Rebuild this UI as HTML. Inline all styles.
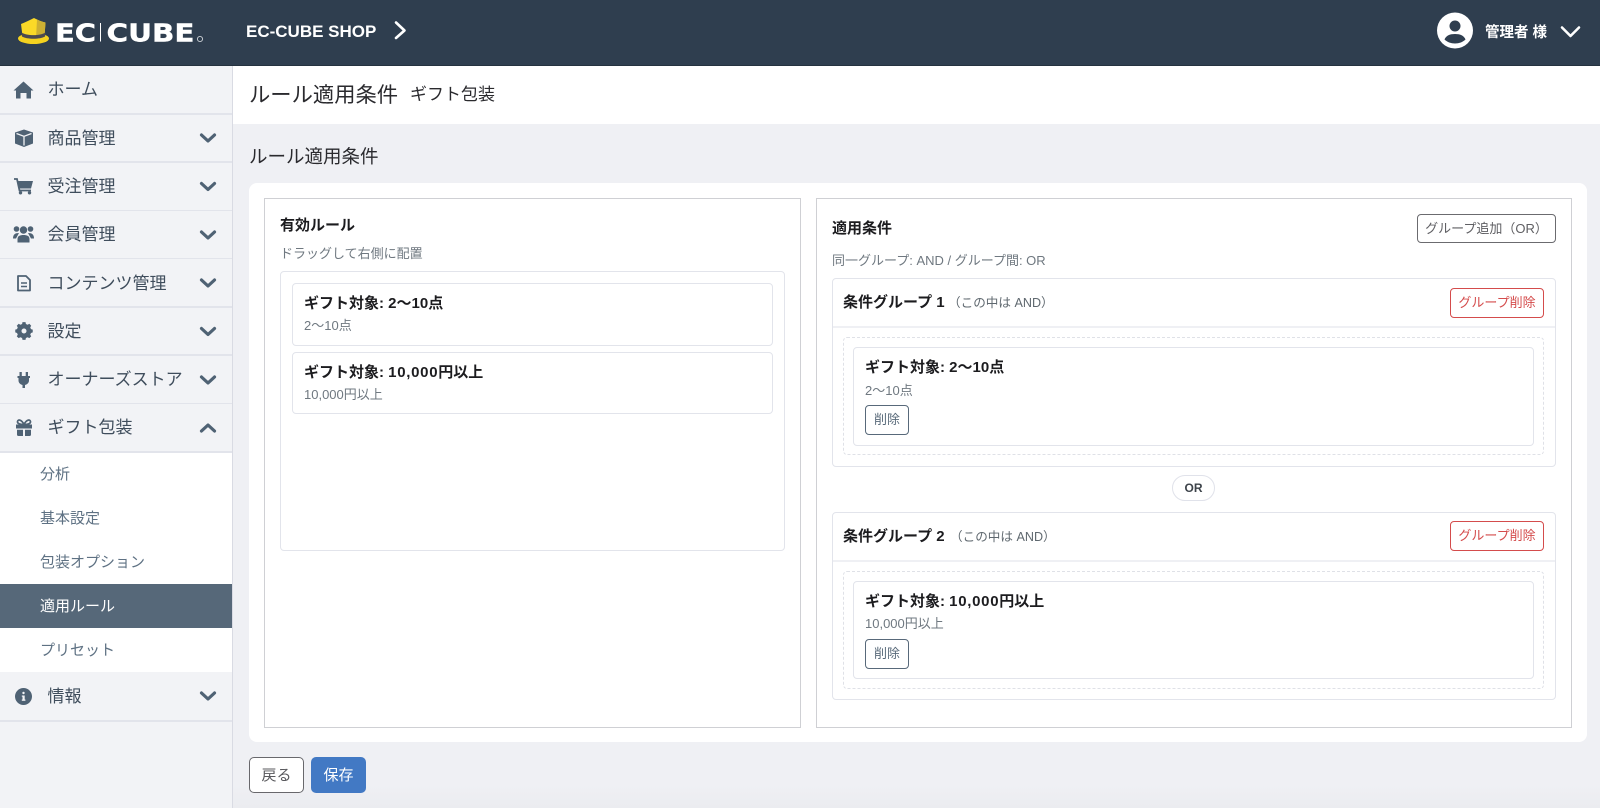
<!DOCTYPE html>
<html lang="ja"><head><meta charset="utf-8"><title>ルール適用条件</title>
<style>
*{box-sizing:border-box}
html,body{margin:0;padding:0}
body{width:1600px;height:808px;overflow:hidden;position:relative;background:linear-gradient(#eff0f4 785px,#ebecf0 808px);font-family:"Liberation Sans","Noto Sans CJK JP",sans-serif;color:#222}
.a{position:absolute}
.t{position:absolute;white-space:nowrap;line-height:24px;height:24px}
.b{font-weight:700;color:#1c1c1f}
svg{position:absolute;overflow:visible}
.line{position:absolute;left:0;width:232px;height:1.5px;background:#e2e4eb}
.nav{font-size:17px;color:#3f4d5c;left:47.5px}
.sub{font-size:15px;color:#5e7183;left:40px}
.box{position:absolute;background:#fff;border:1.5px solid #e2e4eb;border-radius:4px}
.col{position:absolute;background:#fff;border:1.5px solid #cfd0d4}
.mut{font-size:13px;color:#6f7880}
.ti{font-size:15px}
.n{letter-spacing:.7px}
.btn{position:absolute;border-radius:4px;text-align:center;background:#fff;white-space:nowrap}
.red{border:1.5px solid #d44c4c;color:#d44c4c;font-size:13px;line-height:27px;width:94px;height:30px}
.del{border:1.5px solid #58697a;color:#5a6b7b;font-size:13px;line-height:28px;width:44px;height:30px}
.dash{position:absolute;border:1.5px dashed #dfe1e7;border-radius:4px}
</style></head><body>
<div class="a" style="left:0;top:0;width:1600px;height:66px;background:#2f3e4f;border-bottom:1px solid #25323f"></div>
<svg style="left:0;top:0" width="240" height="66">
<ellipse cx="33.500" cy="38.500" rx="15.500" ry="5.500" fill="#f5d21f"/>
<path d="M21 24 C26 22 30 20 34 18 C38 20 41 21.500 45.500 22.500 L44.500 36 C38 39 28 39 22.500 36Z" fill="#fbd927"/>
<path d="M37 19.500 C39.500 21 42 22 45.500 22.500 L44.500 36 C42 37.200 39.500 38 36 38.300Z" fill="#cdb033"/>
<path d="M21.500 32.500 C27 36 40 36 45.500 32.500 L45 36.500 C40 39.500 27 39.500 22 36.500Z" fill="#4d4a50"/>
<text x="55" y="41.500" font-family="DejaVu Sans" font-weight="700" font-size="25" fill="#fff" stroke="#fff" stroke-width=".4" textLength="41" lengthAdjust="spacingAndGlyphs">EC</text>
<rect x="100" y="23" width="1" height="18.500" fill="#fff"/>
<text x="106.500" y="41.500" font-family="DejaVu Sans" font-weight="700" font-size="25" fill="#fff" stroke="#fff" stroke-width=".4" textLength="88" lengthAdjust="spacingAndGlyphs">CUBE</text>
<circle cx="200" cy="39" r="2.600" fill="none" stroke="#cfd3d8" stroke-width=".9"/>
</svg>
<div class="t" style="left:246px;top:20px;font-size:17px;font-weight:700;color:#fff">EC-CUBE SHOP</div>
<svg style="left:0;top:0" width="1600" height="66" fill="none" stroke="#fff" stroke-width="2.600" stroke-linecap="round" stroke-linejoin="round">
<path d="M396 22.500L404.500 30.500L396 38"/><path d="M1562 27.500L1570.500 36L1579 27.500"/>
</svg>
<svg style="left:1437px;top:12px" width="36" height="37"><circle cx="18" cy="18.500" r="18" fill="#fff"/><circle cx="18" cy="14" r="5.500" fill="#2f3e4f"/><path d="M7.500 27.500C9 23.500 13 22 18 22S27 23.500 28.500 27.500C26 30 22 31.500 18 31.500S10 30 7.500 27.500Z" fill="#2f3e4f"/></svg>
<div class="t" style="left:1485px;top:20.500px;font-size:14.500px;font-weight:700;color:#fff">管理者 様</div>

<div class="a" style="left:0;top:66px;width:233px;height:742px;background:#f2f3f6;border-right:1px solid #d9dbe3"></div>
<div class="a" style="left:0;top:452px;width:232px;height:220px;background:#fff"></div>
<div class="a" style="left:0;top:584px;width:232px;height:44px;background:#566879"></div>
<div class="line" style="top:113px"></div><div class="line" style="top:161px"></div><div class="line" style="top:209.500px"></div><div class="line" style="top:257.500px"></div><div class="line" style="top:306px"></div><div class="line" style="top:354px"></div><div class="line" style="top:402.500px"></div><div class="line" style="top:451px"></div><div class="line" style="top:720px"></div>

<div class="t nav" style="top:78px">ホーム</div>
<div class="t nav" style="top:126.500px">商品管理</div>
<div class="t nav" style="top:174.500px">受注管理</div>
<div class="t nav" style="top:223px">会員管理</div>
<div class="t nav" style="top:271.500px">コンテンツ管理</div>
<div class="t nav" style="top:319.500px">設定</div>
<div class="t nav" style="top:368px">オーナーズストア</div>
<div class="t nav" style="top:416px">ギフト包装</div>
<div class="t sub" style="top:462.500px">分析</div>
<div class="t sub" style="top:506.500px">基本設定</div>
<div class="t sub" style="top:550.500px">包装オプション</div>
<div class="t sub" style="top:594.500px;color:#fff">適用ルール</div>
<div class="t sub" style="top:638.500px">プリセット</div>
<div class="t nav" style="top:684.500px">情報</div>

<svg style="left:0;top:0" width="232" height="808" fill="#4f6274">
<path d="M23.500 81.500L33.500 90.500H31V98.500H26.500V93H20.500V98.500H16V90.500H13.500Z"/>
<path d="M24 129.500L33 132.500V143.500L24 147L15 143.500V132.500Z"/><path d="M16.500 133.500L24 136.300L31.500 133.500M24 136.300V145.500" fill="none" stroke="#f2f3f6" stroke-width="1.300"/>
<path d="M17.500 181H33L31 188.500H19Z"/><path d="M14 179H17L19.500 190.500H31" fill="none" stroke="#4f6274" stroke-width="1.800"/><circle cx="20.500" cy="192.800" r="1.700"/><circle cx="29.500" cy="192.800" r="1.700"/>
<circle cx="23.500" cy="230" r="3.700"/><circle cx="16.500" cy="229" r="2.800"/><circle cx="30.500" cy="229" r="2.800"/><path d="M17.500 242.500V239C17.500 236 20 235 23.500 235S29.500 236 29.500 239V242.500Z"/><path d="M13 238.500C13 234.500 15 233 19 233L16 238.500ZM34 238.500C34 234.500 32 233 28 233L31 238.500Z"/>
<path d="M18 276H26L30 280V290.500H18Z" fill="none" stroke="#4f6274" stroke-width="1.800" stroke-linejoin="round"/><path d="M21 283H27M21 286.500H27" stroke="#4f6274" stroke-width="1.400"/>
<g transform="translate(24 331) scale(.76) translate(-23.500 -331.750)"><path fill-rule="evenodd" d="M21.500 320H25.500L26 322.500L28.300 323.500L30.500 322.200L33 324.800L31.700 327L32.700 329.300L35 330V333.500L32.700 334.300L31.700 336.500L33 338.800L30.500 341.200L28.300 340L26 341L25.500 343.500H21.500L21 341L18.700 340L16.500 341.200L14 338.800L15.300 336.500L14.300 334.300L12 333.500V330L14.300 329.300L15.300 327L14 324.800L16.500 322.200L18.700 323.500L21 322.500ZM23.500 328.500A3.300 3.300 0 1 0 23.500 335.100A3.300 3.300 0 1 0 23.500 328.500Z"/></g>
<path d="M19.500 372H21.800V376H25.700V372H28V376H30V378H29V380.500C29 383 27 384.500 25 385V388H22.500V385C20.500 384.500 18.500 383 18.500 380.500V378H17.500V376H19.500Z"/>
<path d="M16 424.500H32V428.500H16Z"/><path d="M17 429.800H23V436H18.500C17.500 436 17 435.500 17 434.500ZM25 429.800H31V434.500C31 435.500 30.500 436 29.500 436H25Z"/><path d="M24 424.500C21.500 419.500 18 419 17.500 421.500C17.200 423.500 20 424.500 24 424.500C28 424.500 30.800 423.500 30.500 421.500C30 419 26.500 419.500 24 424.500Z" fill="none" stroke="#4f6274" stroke-width="1.700"/>
<circle cx="23.500" cy="696.500" r="8.500"/><rect x="22.500" y="695.500" width="2.200" height="5" fill="#f2f3f6"/><rect x="21.800" y="699.500" width="3.600" height="1.300" fill="#f2f3f6"/><rect x="21.800" y="695.500" width="2.400" height="1.200" fill="#f2f3f6"/><circle cx="23.500" cy="693" r="1.200" fill="#f2f3f6"/>
<g fill="none" stroke="#4f6274" stroke-width="3.200" stroke-linecap="round" stroke-linejoin="round">
<path d="M201.500 135L208 141L214.500 135"/><path d="M201.500 183.500L208 189.500L214.500 183.500"/><path d="M201.500 232L208 238L214.500 232"/><path d="M201.500 280L208 286L214.500 280"/><path d="M201.500 328.500L208 334.500L214.500 328.500"/><path d="M201.500 377L208 383L214.500 377"/><path d="M201.500 431L208 425L214.500 431"/><path d="M201.500 693L208 699L214.500 693"/>
</g></svg>

<div class="a" style="left:233px;top:66px;width:1367px;height:58px;background:#fff"></div>
<div class="t" style="left:249px;top:82.500px;font-size:21.300px;color:#2a2a2e">ルール適用条件</div>
<div class="t" style="left:410px;top:82.500px;font-size:17px;color:#2a2a2e">ギフト包装</div>
<div class="t" style="left:249px;top:144.500px;font-size:18.500px;color:#2a2a2e">ルール適用条件</div>
<div class="a" style="left:249px;top:183px;width:1338px;height:559px;background:#fff;border-radius:8px"></div>

<div class="col" style="left:264px;top:198px;width:537px;height:530px"></div>
<div class="t b ti" style="left:280px;top:214px">有効ルール</div>
<div class="t mut" style="left:280px;top:242px">ドラッグして右側に配置</div>
<div class="box" style="left:280px;top:271px;width:505px;height:280px"></div>
<div class="box" style="left:292px;top:283px;width:481px;height:63px"></div>
<div class="t b ti" style="left:304px;top:292px">ギフト対象: 2〜10点</div>
<div class="t mut" style="left:304px;top:313.500px">2〜10点</div>
<div class="box" style="left:292px;top:352px;width:481px;height:62px"></div>
<div class="t b ti" style="left:304px;top:361px">ギフト対象: <span class="n">10,000</span>円以上</div>
<div class="t mut" style="left:304px;top:382.500px">10,000円以上</div>

<div class="col" style="left:816px;top:198px;width:756px;height:530px"></div>
<div class="t b ti" style="left:832px;top:217px">適用条件</div>
<div class="btn" style="left:1417px;top:214px;width:139px;height:29px;border:1.5px solid #6b6b6f;color:#5f5f63;font-size:13px;line-height:27px">グループ追加（OR）</div>
<div class="t mut" style="left:832px;top:249px">同一グループ: AND / グループ間: OR</div>

<div class="box" style="left:832px;top:278px;width:724px;height:189px"></div>
<div class="a" style="left:833px;top:326px;width:722px;height:1.500px;background:#eff0f4"></div>
<div class="t b ti" style="left:843px;top:291px">条件グループ 1</div>
<div class="t" style="left:948px;top:291px;font-size:12.600px;color:#5f686f">（この中は AND）</div>
<div class="btn red" style="left:1450px;top:288px">グループ削除</div>
<div class="dash" style="left:843px;top:337px;width:701px;height:118px"></div>
<div class="box" style="left:853px;top:347px;width:681px;height:99px"></div>
<div class="t b ti" style="left:865px;top:356px">ギフト対象: 2〜10点</div>
<div class="t mut" style="left:865px;top:378.500px">2〜10点</div>
<div class="btn del" style="left:865px;top:405px">削除</div>

<div class="a" style="left:1172px;top:475px;width:43px;height:26px;border:1.5px solid #e0e2ea;border-radius:13px;background:#fff;text-align:center;font-size:12px;font-weight:700;line-height:24px;color:#3d434a">OR</div>

<div class="box" style="left:832px;top:512px;width:724px;height:188px"></div>
<div class="a" style="left:833px;top:560px;width:722px;height:1.500px;background:#eff0f4"></div>
<div class="t b ti" style="left:843px;top:524.500px">条件グループ 2</div>
<div class="t" style="left:950px;top:524.500px;font-size:12.600px;color:#5f686f">（この中は AND）</div>
<div class="btn red" style="left:1450px;top:521px">グループ削除</div>
<div class="dash" style="left:843px;top:571px;width:701px;height:118px"></div>
<div class="box" style="left:853px;top:581px;width:681px;height:98px"></div>
<div class="t b ti" style="left:865px;top:590px">ギフト対象: <span class="n">10,000</span>円以上</div>
<div class="t mut" style="left:865px;top:611.500px">10,000円以上</div>
<div class="btn del" style="left:865px;top:639px">削除</div>

<div class="btn" style="left:249px;top:757px;width:55px;height:36px;border:1.5px solid #68686c;border-radius:5px;color:#59595d;font-size:15px;line-height:35px">戻る</div>
<div class="btn" style="left:311px;top:757px;width:55px;height:36px;background:#4279c4;border-radius:5px;color:#fff;font-size:15px;line-height:37px">保存</div>
</body></html>
